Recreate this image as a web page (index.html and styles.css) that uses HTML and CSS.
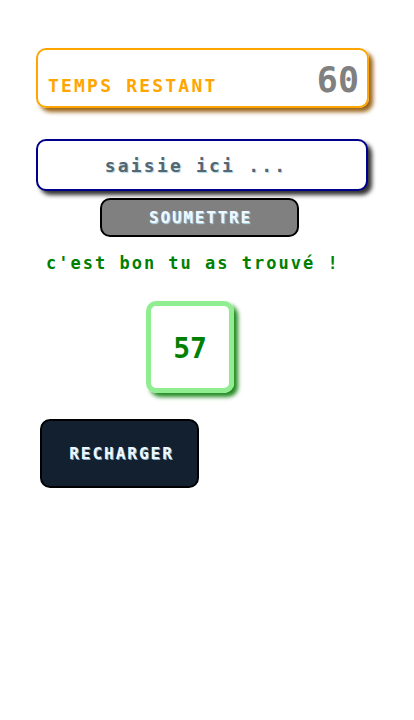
FILE: index.html
```html
<!DOCTYPE html>
<html lang="fr">
<head>
<meta charset="utf-8">
<title>Jeu</title>
<link rel="stylesheet" href="styles.css">
</head>
<body>
<main class="game">
  <div class="timer">
    <span class="timer-label">TEMPS RESTANT</span>
    <span class="timer-value">60</span>
  </div>
  <input class="guess" type="text" placeholder="saisie ici ...">
  <button class="submit" type="button">SOUMETTRE</button>
  <p class="message">c'est bon tu as trouvé !</p>
  <div class="answer">57</div>
  <button class="reload" type="button">RECHARGER</button>
</main>
</body>
</html>
```

FILE: styles.css
```css
* { box-sizing: border-box; }
html, body { margin: 0; padding: 0; background: #fff; }
body { font-family: "DejaVu Sans Mono", monospace; font-weight: bold; }
.game {
  display: flex;
  flex-direction: column;
  align-items: flex-start;
  padding: 48px 0 0 36px;
}
.timer {
  width: 333px;
  height: 60px;
  border: 2px solid #ffa500;
  border-radius: 10px;
  box-shadow: 4px 4px 4px #9a6418;
  display: flex;
  justify-content: space-between;
  align-items: baseline;
  padding: 10px 8px 0 10px;
}
.timer-label {
  color: #ffa500;
  font-size: 18px;
  letter-spacing: 2.2px;
}
.timer-value {
  color: #808080;
  font-size: 35px;
}
.guess {
  margin-top: 31px;
  width: 332px;
  height: 52px;
  border: 2px solid #00008b;
  border-radius: 10px;
  box-shadow: 4px 4px 4px #333;
  font-family: "DejaVu Sans Mono", monospace;
  font-weight: bold;
  font-size: 18px;
  letter-spacing: 2.2px;
  text-align: center;
  outline: none;
  background: #fff;
  padding: 0 12px 0 0;
}
.guess::placeholder {
  color: #56656f;
  font-weight: 600;
  text-shadow: 1px 1px 1px #add8e6;
}
.submit {
  margin: 7px 0 0 64px;
  width: 199px;
  height: 39px;
  background: #808080;
  border: 2px solid #000;
  border-radius: 10px;
  color: #f0f8ff;
  text-shadow: 1px 1px 1px #add8e6;
  font-family: "DejaVu Sans Mono", monospace;
  font-weight: bold;
  font-size: 16px;
  letter-spacing: 1.8px;
  padding: 0 0 0 2px;
}
.message {
  margin: 16px 0 0 10px;
  color: #008000;
  font-size: 17px;
  letter-spacing: 2px;
}
.answer {
  margin: 28px 0 0 110px;
  width: 88px;
  height: 92px;
  border: 5px solid #90ee90;
  border-radius: 10px;
  box-shadow: 4px 4px 4px #228b22;
  display: flex;
  align-items: center;
  justify-content: center;
  color: #008000;
  font-size: 28px;
  padding-top: 2px;
}
.reload {
  margin: 26px 0 0 4px;
  width: 159px;
  height: 69px;
  background: #13202f;
  border: 2px solid #000;
  border-radius: 10px;
  color: #f0f8ff;
  text-shadow: 1px 1px 0 #7fa8c0;
  font-family: "DejaVu Sans Mono", monospace;
  font-weight: bold;
  font-size: 16px;
  letter-spacing: 2px;
  padding: 0 0 0 4px;
}
```
